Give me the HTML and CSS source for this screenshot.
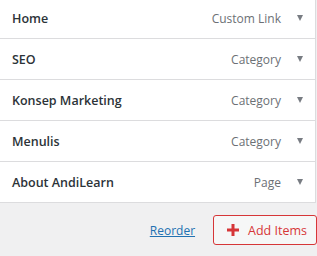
FILE: index.html
```html
<!doctype html>
<html lang="en">
  <head>
    <meta charset="UTF-8" />
    <meta name="viewport" content="width=device-width, initial-scale=1.0" />
    <title>Menu Items</title>
    <link rel="stylesheet" href="styles.css">
  </head>
  <body>
    <div class="menu-list">
      <div class="menu-item">
        <span class="item-title">Home</span>
        <span class="item-type">Custom Link</span>
        <span class="item-toggle"></span>
      </div>
      <div class="menu-item">
        <span class="item-title">SEO</span>
        <span class="item-type">Category</span>
        <span class="item-toggle"></span>
      </div>
      <div class="menu-item">
        <span class="item-title">Konsep Marketing</span>
        <span class="item-type">Category</span>
        <span class="item-toggle"></span>
      </div>
      <div class="menu-item">
        <span class="item-title">Menulis</span>
        <span class="item-type">Category</span>
        <span class="item-toggle"></span>
      </div>
      <div class="menu-item">
        <span class="item-title">About AndiLearn</span>
        <span class="item-type">Page</span>
        <span class="item-toggle"></span>
      </div>
    </div>

    <div class="actions">
      <a href="#" class="reorder">Reorder</a>
      <button class="add-items">
        <svg width="12" height="12" viewBox="0 0 12 12">
          <path d="M6 0v12M0 6h12" stroke="#d63638" stroke-width="3" />
        </svg>
        <span>Add Items</span>
      </button>
    </div>
  </body>
</html>
```

FILE: styles.css
```css
body {
  margin: 0;
  font-family: "Open Sans", "Noto Sans", sans-serif;
  background: #f0f0f1;
  overflow: hidden;
}
.menu-list {
  width: 315px;
  margin-top: -2px;
  background: #fff;
  border-right: 1px solid #dcdcde;
  border-bottom: 1px solid #dcdcde;
}
.menu-item {
  display: flex;
  align-items: center;
  height: 40px;
  padding: 0 12px 0 12px;
  border-top: 1px solid #dcdcde;
}
.menu-item:first-child {
  border-top: none;
}
.item-title {
  flex: 1;
  font-size: 12.5px;
  font-weight: 600;
  color: #2c3338;
}
.item-type {
  font-size: 12px;
  color: #6c7075;
}
.item-toggle {
  width: 0;
  height: 0;
  margin-left: 16px;
  border-left: 3.5px solid transparent;
  border-right: 3.5px solid transparent;
  border-top: 6px solid #787c82;
}
.actions {
  display: flex;
  justify-content: flex-end;
  align-items: center;
  gap: 18px;
  margin-top: 12px;
  width: 317px;
}
.reorder {
  font-size: 12px;
  color: #2271b1;
}
.add-items {
  display: flex;
  align-items: center;
  gap: 9px;
  height: 30px;
  padding: 0 9px 0 13px;
  background: #f6f7f7;
  border: 1px solid #d63638;
  border-radius: 3px;
  color: #d63638;
  font-family: "Open Sans", "Noto Sans", sans-serif;
  font-size: 12.5px;
  white-space: nowrap;
  cursor: pointer;
}
```
